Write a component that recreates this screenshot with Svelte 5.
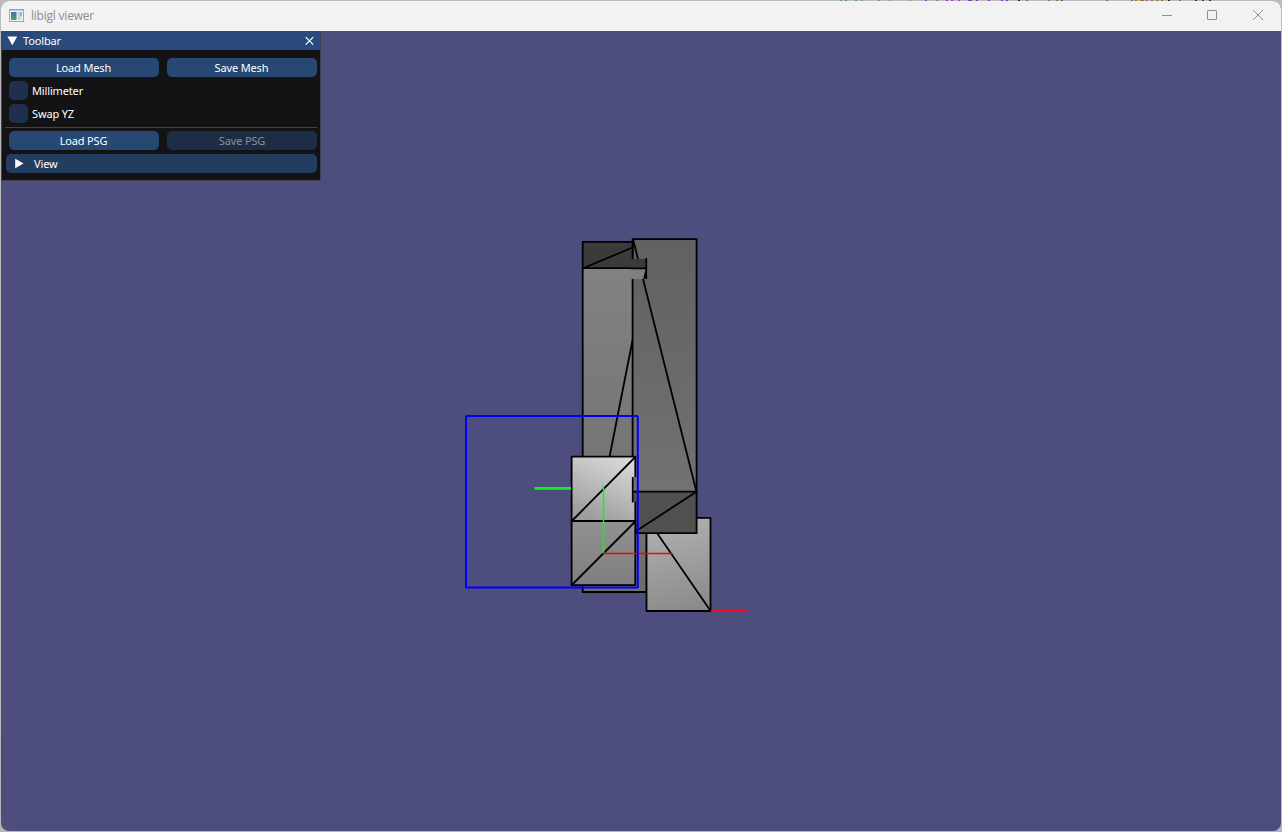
<script>
  let open = $state(true);
  let millimeter = $state(false);
  let swapYZ = $state(false);

  const specks = [
    [840, '#5797a8'], [845, '#5797a8'], [855, '#5797a8'], [861, '#5797a8'], [878, '#888'], [889, '#999'], [909, '#999'],
    [925, '#8c35cf'], [936, '#a36ac9'], [946, '#8c35cf'], [951, '#8c35cf'], [958, '#8c55bf'], [968, '#8c35cf'], [970, '#8c35cf'],
    [976, '#8c35cf'], [988, '#8c35cf'], [1001, '#8c35cf'], [1006, '#8c35cf'], [1018, '#292933'], [1026, '#8c6b3e'],
    [1048, '#8a704b'], [1056, '#9c7428'], [1061, '#72543c'], [1106, '#83634a'], [1131, '#8d6b35'], [1135, '#9c7428'],
    [1140, '#9c7428'], [1142, '#9c7428'], [1146, '#8a704b'], [1151, '#9c7428'], [1156, '#8a704b'], [1161, '#9c7428'],
    [1168, '#292933'], [1179, '#9c7428'], [1195, '#292933'], [1202, '#43372d'], [1209, '#292933']
  ];
</script>

<div class="desktop">
  <svg class="behind" width="1282" height="1" shape-rendering="crispEdges">
    {#each specks as [x, color]}
      <rect {x} y="0" width="2" height="1" fill={color} />
    {/each}
  </svg>
  <div class="window">
    <header class="titlebar">
      <svg class="appicon" width="16" height="16" viewBox="0 0 16 16">
        <defs>
          <linearGradient id="scene" x1="0" y1="0" x2="0" y2="1">
            <stop offset="0" stop-color="#496fa6" /><stop offset="1" stop-color="#4da177" />
          </linearGradient>
        </defs>
        <rect x=".5" y=".5" width="14" height="12" fill="#f3f4f5" stroke="#9fa5a9" />
        <path d="M1 1.5H14" stroke="#c1c9cd" />
        <rect x="2" y="3" width="5.5" height="8" fill="url(#scene)" />
        <rect x="8.5" y="3" width="2.5" height="8" fill="#c3d3da" />
        <rect x="11" y="3" width="2" height="4" fill="#8fb6cf" />
        <rect x="11" y="7" width="2" height="4" fill="#d7e0e2" />
      </svg>
      <span class="title">libigl viewer</span>
      <div class="controls">
        <svg width="46" height="30"><path d="M17 14.5H27" stroke="#8f8f8f" /></svg>
        <svg width="46" height="30"><rect x="16.5" y="9.5" width="9" height="9" rx=".5" fill="none" stroke="#8f8f8f" /></svg>
        <svg width="44" height="30"><path d="M16 9L26 19M26 9L16 19" stroke="#8f8f8f" /></svg>
      </div>
    </header>

    <main class="viewport">
      <svg class="scene" width="1280" height="800" viewBox="1 31 1280 800">
        <defs>
          <linearGradient id="back" x1="0" y1="0" x2="0" y2="1">
            <stop offset="0" stop-color="#828282" /><stop offset="1" stop-color="#6c6c6c" />
          </linearGradient>
          <linearGradient id="tower" x1="0" y1="0" x2="0" y2="1">
            <stop offset="0" stop-color="#616161" /><stop offset="1" stop-color="#727272" />
          </linearGradient>
          <linearGradient id="lit" x1=".8" y1="0" x2=".35" y2="1">
            <stop offset="0" stop-color="#dadada" /><stop offset="1" stop-color="#9c9c9c" />
          </linearGradient>
          <linearGradient id="lower" x1="0" y1="0" x2="0" y2="1">
            <stop offset="0" stop-color="#929292" /><stop offset="1" stop-color="#7e7e7e" />
          </linearGradient>
          <linearGradient id="right" x1=".4" y1="0" x2=".6" y2="1">
            <stop offset="0" stop-color="#b0b0b0" /><stop offset="1" stop-color="#8b8b8b" />
          </linearGradient>
        </defs>
        <g stroke="#000" stroke-width="1.8" stroke-linejoin="round" stroke-linecap="round">
          <rect x="582.7" y="268" width="64" height="324" fill="url(#back)" />
          <path d="M632.6 340L609.5 457" fill="none" />
          <rect x="646.5" y="517.8" width="64" height="93.2" fill="url(#right)" />
          <path d="M657 533L710.3 610.6" />
          <rect x="632.6" y="239.2" width="64" height="253" fill="url(#tower)" />
          <path d="M633.2 240L696.3 491" />
          <path d="M632.6 491.6H696.6V533.2H636Z" fill="#505050" />
          <path d="M637 530.5L696 492" />
          <path d="M582.7 241.8H632.6V268.2H582.7Z" fill="#3b3b3b" />
          <path d="M583.5 268L632.6 247.5" />
        </g>
        <path d="M631 259H646V268H631Z" fill="#3b3b3b" />
        <path d="M631 269H646L643.5 279H631Z" fill="#808080" />
        <path d="M630.5 268.3H646.5M646.3 258V279" fill="none" stroke="#000" stroke-width="1.7" />
        <path d="M645.5 269L643.3 278.5H646Z" />
        <g stroke="#000" stroke-width="1.8" stroke-linejoin="round" stroke-linecap="round">
          <rect x="571.6" y="456.6" width="63.7" height="64.4" fill="url(#lit)" />
          <rect x="571.6" y="521" width="63.7" height="64.1" fill="url(#lower)" />
          <path d="M572.3 520.5L634.8 457.5M572.3 584.5L634.8 522" />
        </g>
        <path d="M632 477H637V491H632Z" fill="#727272" />
        <path d="M632 491H637V502H632Z" fill="#505050" />
        <path d="M632.7 477V502.5M632 491.6H638" fill="none" stroke="#000" stroke-width="1.7" />
        <g fill="none">
          <path d="M534.5 488.4H571" stroke="#0cf51a" stroke-width="2.6" />
          <path d="M603 485.5H604V553H603Z" fill="#0f0" stroke="#0f0" stroke-width=".5" />
          <path d="M604 553H672V554H604Z" fill="#f00" stroke="#f00" stroke-width=".5" />
          <path d="M711 610.8H748" stroke="#ff0820" stroke-width="1.8" />
          <rect x="466" y="415.9" width="171.8" height="171.6" rx=".5" stroke="#00f" stroke-width="2" />
        </g>
      </svg>

      {#if open}
        <section class="panel">
          <div class="panel-title">
            <svg width="12" height="19"><path d="M1.4 5.5H11.2L6.3 14.2Z" fill="#fff" /></svg>
            <span>Toolbar</span>
            <button class="close" aria-label="Close" onclick={() => (open = false)}>
              <svg width="10" height="10"><path d="M.7 1.2L8.2 8.7M8.2 1.2L.7 8.7" stroke="#fff" stroke-width="1.2" /></svg>
            </button>
          </div>
          <div class="body">
            <div class="pair">
              <button>Load Mesh</button>
              <button>Save Mesh</button>
            </div>
            <label><input type="checkbox" bind:checked={millimeter} /><span>Millimeter</span></label>
            <label><input type="checkbox" bind:checked={swapYZ} /><span>Swap YZ</span></label>
            <div class="separator"></div>
            <div class="pair">
              <button>Load PSG</button>
              <button disabled>Save PSG</button>
            </div>
            <div class="fold">
              <svg width="9" height="19"><path d="M.2 4.8V14.2L8.6 9.5Z" fill="#fff" /></svg>
              <span>View</span>
            </div>
          </div>
        </section>
      {/if}
    </main>
  </div>
</div>

<style>
  :global(body) { margin: 0; overflow: hidden; }
  .desktop { position: relative; box-sizing: border-box; width: 1282px; height: 832px; padding: 1px; background: linear-gradient(#bdbbbd, #b6b6ba); }
  .behind { position: absolute; top: 0; left: 0; }
  .window { display: flex; flex-direction: column; width: 1280px; height: 830px; border-radius: 8px; overflow: hidden; background: #4d4d7e; }
  .titlebar { display: flex; align-items: center; height: 30px; flex: none; padding-left: 8px; background: #f2f2f2; }
  .appicon { margin-top: 1px; }
  .title { margin-left: 6px; font: 12px/30px "Open Sans", sans-serif; letter-spacing: -0.22px; color: #8c8c8c; }
  .controls { display: flex; margin-left: auto; }
  .controls svg { display: block; }
  .viewport { display: grid; flex: 1; min-height: 0; }
  .scene, .panel { grid-area: 1 / 1; }
  .scene { display: block; }
  .panel { box-sizing: border-box; z-index: 1; width: 320px; height: 150px; border: 1px solid #43434f; border-top: 0; background: #131315; color: #fff; font: 11px/19px "Noto Sans", sans-serif; letter-spacing: -0.15px; }
  .panel-title { display: flex; align-items: center; height: 19px; padding: 0 5px 0 4px; background: #294a7a; }
  .panel-title span { margin-left: 5px; height: 19px; line-height: 20px; }
  .close { width: 10px; height: 10px; margin-left: auto; background: none; }
  .close svg { display: block; }
  .body { display: flex; flex-direction: column; gap: 4px; padding: 8px 3px 0 7px; }
  .pair { display: grid; grid-template-columns: 150px 150px; gap: 8px; }
  button { padding: 0; border: 0; font: inherit; letter-spacing: inherit; color: inherit; }
  .pair button { height: 19px; padding-right: 1px; border-radius: 5px; background: #264873; }
  .pair button:disabled { padding-right: 0; background: #1d2d44; color: #88919d; }
  label { display: flex; height: 19px; gap: 4px; }
  input { appearance: none; width: 19px; height: 19px; margin: 0; border-radius: 5px; background: #1f304f; }
  .separator { height: 1px; margin: 0 0 -1px -4px; background: #43434d; }
  .fold { display: flex; align-items: center; height: 19px; margin-left: -3px; padding-left: 9px; border-radius: 5px; background: #233d5e; }
  .fold span { margin-left: 10px; }
</style>
